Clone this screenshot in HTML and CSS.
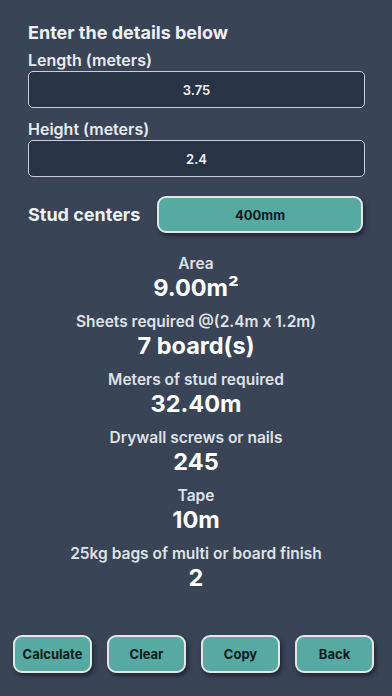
FILE: index.html
```html
<!DOCTYPE html>
<html>
<head>
<meta charset="utf-8">
<link rel="stylesheet" href="styles.css">
</head>
<body>
<div class="page">
  <div class="form">
    <h1 class="title">Enter the details below</h1>
    <div class="field-label">Length (meters)</div>
    <div class="input">3.75</div>
    <div class="field-label gap">Height (meters)</div>
    <div class="input">2.4</div>
    <div class="stud-row">
      <div class="stud-label">Stud centers</div>
      <div class="btn stud-btn">400mm</div>
    </div>
  </div>
  <div class="results">
    <div class="res"><div class="res-label">Area</div><div class="res-value">9.00m²</div></div>
    <div class="res"><div class="res-label">Sheets required @(2.4m x 1.2m)</div><div class="res-value">7 board(s)</div></div>
    <div class="res"><div class="res-label">Meters of stud required</div><div class="res-value">32.40m</div></div>
    <div class="res"><div class="res-label">Drywall screws or nails</div><div class="res-value">245</div></div>
    <div class="res"><div class="res-label">Tape</div><div class="res-value">10m</div></div>
    <div class="res"><div class="res-label">25kg bags of multi or board finish</div><div class="res-value">2</div></div>
  </div>
  <div class="footer">
    <div class="btn act">Calculate</div>
    <div class="btn act">Clear</div>
    <div class="btn act">Copy</div>
    <div class="btn act">Back</div>
  </div>
</div>
</body>
</html>
```
FILE: styles.css
```css
html, body {
  margin: 0;
  padding: 0;
  background: #394457;
  font-family: Inter, "Noto Sans", "Liberation Sans", sans-serif;
  color: #eef0f3;
}
.page {
  min-height: 696px;
  display: flex;
  flex-direction: column;
}
.form {
  padding: 21px 27px 0 28px;
}
.title {
  margin: 0;
  font-size: 18px;
  line-height: 24px;
  font-weight: 700;
  color: #eef0f3;
}
.field-label {
  margin-top: 5px;
  font-size: 16px;
  line-height: 20px;
  font-weight: 600;
  color: #e8ebee;
}
.field-label.gap {
  margin-top: 11px;
}
.input {
  margin-top: 1px;
  height: 35px;
  box-sizing: content-box;
  border: 1px solid #c9ced6;
  border-radius: 5px;
  background: #283346;
  display: flex;
  align-items: center;
  justify-content: center;
  font-size: 13px;
  font-weight: 600;
  color: #f1f2f4;
}
.stud-row {
  margin-top: 19px;
  display: flex;
  align-items: center;
}
.stud-label {
  flex: 0 0 129px;
  white-space: nowrap;
  font-size: 18px;
  line-height: 24px;
  font-weight: 700;
  color: #eef0f3;
}
.btn {
  background: #56aaa1;
  border: 2px solid #e4e6e4;
  border-radius: 9px;
  box-shadow: 2px 3px 4px rgba(10, 15, 25, 0.55);
  display: flex;
  align-items: center;
  justify-content: center;
  color: #0f1a1c;
  font-weight: 700;
  font-size: 13px;
  box-sizing: border-box;
}
.stud-btn {
  flex: 0 0 206px;
  height: 37px;
}
.results {
  margin-top: 21px;
  display: flex;
  flex-direction: column;
  align-items: center;
  gap: 10px;
}
.res {
  text-align: center;
}
.res-label {
  font-size: 15.5px;
  line-height: 20px;
  font-weight: 600;
  color: #dfe2e6;
}
.res-value {
  font-size: 23.5px;
  line-height: 28px;
  font-weight: 700;
  color: #ffffff;
}
.footer {
  margin-top: auto;
  padding: 0 0 23px 13px;
  display: flex;
  gap: 15px;
}
.act {
  width: 79px;
  height: 38px;
}
```
